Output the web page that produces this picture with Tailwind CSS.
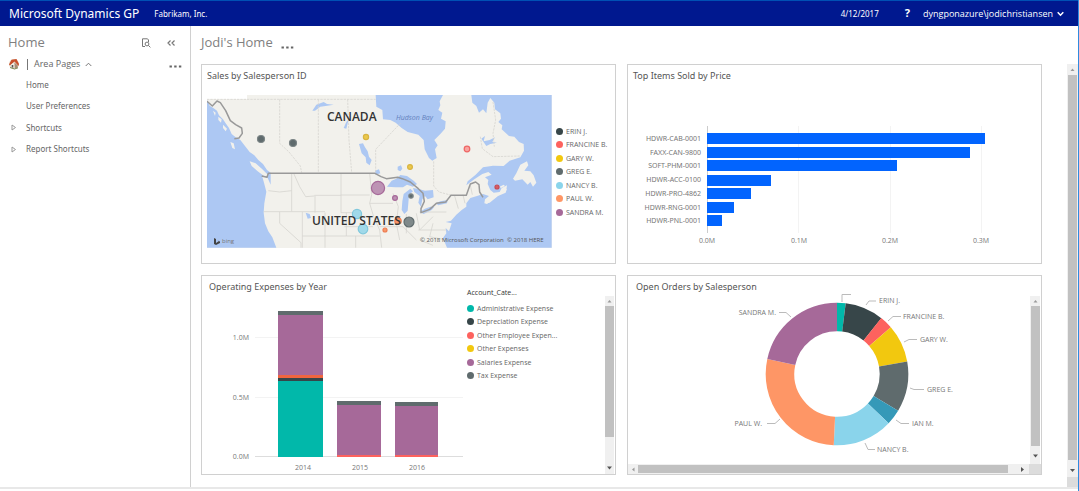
<!DOCTYPE html>
<html lang="en">
<head>
  <meta charset="UTF-8" />
  <meta name="viewport" content="width=device-width, initial-scale=1.0">
  <title>Microsoft Dynamics GP – Home</title>
  <script src="https://cdn.jsdelivr.net/npm/@tailwindcss/browser@4"></script>
</head>
<body class="h-screen flex flex-col overflow-hidden bg-white border-r border-[#2f8be0] font-['Open_Sans',sans-serif] text-[9px] text-[#666]">

  <!-- Top bar -->
  <header class="h-[26px] shrink-0 flex items-center pl-[9px] pr-[14px] bg-[#00188f] border-t border-[#0050b4] text-white font-['Noto_Sans',sans-serif]">
    <h1 class="text-[12px] leading-none whitespace-nowrap">Microsoft Dynamics GP</h1>
    <span class="ml-[15px] text-[8px]">Fabrikam, Inc.</span>
    <span class="ml-auto text-[8px]">4/12/2017</span>
    <button aria-label="Help" class="ml-[26px] text-[11px] font-bold">?</button>
    <button class="ml-[13px] flex items-center gap-1 text-[9px] font-['Open_Sans',sans-serif]">dyngponazure\jodichristiansen
      <svg class="w-[7px] h-[6px]" viewBox="0 0 7 6" fill="none" stroke="currentColor" stroke-width="1.5"><path d="M.7 1.2 3.5 4.2 6.3 1.2" /></svg>
    </button>
  </header>

  <div class="flex-1 flex min-h-0">

    <!-- Sidebar -->
    <aside class="w-[191px] shrink-0 border-r border-[#d0d0d0]">
      <div class="h-[34px] flex items-center pl-2 pr-[14px]">
        <h2 class="text-[13px] text-[#808080]">Home</h2>
        <button aria-label="Find page" class="ml-auto">
          <svg class="w-[10px] h-[10px]" viewBox="0 0 10 10" fill="none" stroke="#777" stroke-width="1"><path d="M4 8.5H1.5V.8H6.5L7.5 2V4" /><circle cx="6" cy="6" r="1.9" /><path d="M7.4 7.4 9.4 9.4" /></svg>
        </button>
        <button aria-label="Collapse" class="ml-[15px]">
          <svg class="w-[10px] h-[10px]" viewBox="0 0 10 10" fill="none" stroke="#777" stroke-width="1.2"><path d="M4.5 2.5 2 5 4.5 7.5M8.5 2.5 6 5 8.5 7.5" /></svg>
        </button>
      </div>
      <div class="h-[14px] -mt-[3px] flex items-center pl-2 pr-2">
        <svg class="w-[12px] h-[12px]" viewBox="0 0 12 12"><circle cx="6" cy="6" r="5" fill="#e9dccb" /><path d="M1 6.5 3.5 1.8 8.5 1 11 6 10.5 8 6.5 3.4 2 7.5Z" fill="#c8502c" /><path d="M2.5 7 5.8 4.4 6.5 9.5 3 9Z" fill="#f4eee4" /><path d="M6.5 4.6 9.8 7.5 9.5 10 6.8 10.6Z" fill="#a98d76" /><path d="M3.7 7h1.6v2.6H3.7Z" fill="#555" /><path d="M2 9.5 6.6 11 10 9.8" stroke="#7d8a55" fill="none" /></svg>
        <span class="ml-[7px] w-px h-[11px] bg-[#777]"></span>
        <button class="ml-[6px] flex items-center gap-[5px]">Area Pages
          <svg class="w-[7px] h-[5px]" viewBox="0 0 7 5" fill="none" stroke="#777"><path d="M.7 4 3.5 1.2 6.3 4" /></svg>
        </button>
        <button aria-label="More" class="ml-auto pt-1">
          <svg class="w-[13px] h-[3px]" viewBox="0 0 13 3" fill="#666"><path d="M.5.5h2.4v2H.5ZM5.2.5h2.4v2H5.2ZM9.9.5h2.4v2H9.9Z" /></svg>
        </button>
      </div>
      <nav class="pt-1 flex flex-col gap-[2px] text-[8px] font-['Noto_Sans',sans-serif]">
        <a href="#" class="h-[19px] flex items-center pl-[26px]">Home</a>
        <a href="#" class="h-[20px] flex items-center pl-[26px]">User Preferences</a>
        <a href="#" class="h-[19px] flex items-center gap-[9px] pl-[11px]">
          <svg class="w-[6px] h-[7px]" viewBox="0 0 6 7" fill="none" stroke="#999"><path d="M1 1 4.5 3.5 1 6Z" /></svg>Shortcuts</a>
        <a href="#" class="h-[20px] flex items-center gap-[9px] pl-[11px]">
          <svg class="w-[6px] h-[7px]" viewBox="0 0 6 7" fill="none" stroke="#999"><path d="M1 1 4.5 3.5 1 6Z" /></svg>Report Shortcuts</a>
      </nav>
    </aside>

    <!-- Content -->
    <main class="flex-1 min-w-0 flex flex-col pl-[10px]">
      <div class="h-[34px] mb-1 shrink-0 flex items-center">
        <h2 class="text-[13px] text-[#808080]">Jodi's Home</h2>
        <button aria-label="More" class="ml-[8px] pt-2">
          <svg class="w-[13px] h-[3px]" viewBox="0 0 13 3" fill="#666"><path d="M.5.5h2.4v2H.5ZM5.2.5h2.4v2H5.2ZM9.9.5h2.4v2H9.9Z" /></svg>
        </button>
      </div>

      <div class="flex-1 min-h-0 flex">
        <div class="flex-1 grid grid-cols-2 gap-x-[11px] gap-y-[11px] content-start pr-[25px]">

          <!-- Sales map -->
          <section class="h-[200px] border border-[#d0d0d0] overflow-hidden">
            <h3 class="h-[30px] pt-[4px] pl-[5px] leading-[13px] text-[#555] font-['Noto_Sans',sans-serif]">Sales by Salesperson ID</h3>
            <div class="flex items-center pl-[5px]">
              <svg class="flex-1 min-w-0" viewBox="0 0 345 153" role="img" aria-label="Map of sales in North America">
                <rect width="345" height="153" fill="#f2f1ec" />
                <g transform="scale(.33333) translate(-22 -105)" stroke-linejoin="round">
                  <path fill="#fff" d="M22 105H142V117H22Z" />
                  <g fill="#adc8f3">
                    <path d="M22 120 30 137 42 145 52 152 58 166 70 178 78 190 88 204 96 222 108 232 122 240 136 258 150 276 164 286 176 300 190 312 202 330 213 338 213 374 203 352 188 350 194 372 200 395 194 430 192 458 196 490 206 514 218 532 230 563H22Z" />
                    <path d="M528 105 530 140 548 150 550 178 572 180 588 188 606 204 624 216 656 224 672 240 675 268 688 294 698 302 711 294 706 268 714 256 704 240 722 222 736 206 738 184 724 176 728 158 716 150 722 136 720 124 730 105Z" />
                    <path d="M815 105 818 128 830 138 838 158 850 148 860 160 864 128 872 114 884 128 886 148 902 160 904 176 896 186 908 196 906 208 928 228 944 230 958 246 972 252 973 272 962 292 930 302 912 318 880 317 850 322 828 344 804 364 800 376 824 358 848 342 866 336 876 344 856 352 866 360 864 372 872 390 882 398 900 396 906 384 922 376 920 390 898 404 880 418 862 432 854 430 856 418 868 408 850 402 832 408 812 414 800 430 800 440 786 450 770 464 754 482 738 486 756 490 748 514 738 504 740 520 730 534 742 563H1056V105Z" />
                    <path d="M562 380 576 362 590 356 602 345 622 348 642 362 652 372 640 380 622 374 610 382 588 382ZM612 402 632 386 640 394 628 404 626 430 624 452 614 462 606 450 608 424ZM640 384 660 388 676 392 700 390 702 412 684 418 676 408 668 418 664 440 656 428 660 408 644 396ZM660 456 676 446 692 440 704 440 696 450 672 462ZM708 430 722 424 744 420 742 430 716 436Z" />
                    <path d="M478 252 490 250 496 262 504 274 508 290 516 300 510 316 500 308 498 292 486 280ZM338 152 350 134 372 126 382 132 402 134 378 138 362 140 346 152ZM432 204 440 186 448 176 444 190 440 206ZM526 332 538 328 542 340 528 344ZM594 320 604 316 608 326 602 334 594 330ZM318 458 330 462 334 474 324 476ZM845 236 856 228 852 244 870 240 886 232 878 246 892 248 872 252 860 258Z" />
                  </g>
                  <!-- islands -->
                  <g fill="#f2f1ec">
                    <path d="M940 356 950 340 962 314 982 304 986 316 974 332 992 334 1002 346 1010 368 1000 380 992 366 984 374 968 358 946 362Z" />
                    <path d="M150 304 168 310 188 328 206 346 196 350 174 334 156 318ZM92 246 102 250 106 268 98 264ZM56 170 66 178 64 188 56 180ZM40 152 48 158 46 168ZM70 194 82 206 78 214 70 204ZM900 380 912 374 916 378 904 384ZM885 402 905 398 922 386 918 398 895 408 870 428 860 430 864 420Z" />
                  </g>
                  <!-- provinces and states -->
                  <g fill="none" stroke="#d6d4cf" stroke-width="2.4">
                    <path stroke-dasharray="7 3" d="M22 118H528M240 118V250L268 276 302 318 306 338M356 118V338M444 118 448 240 456 338M528 336V268L602 190M702 304V378L718 396 756 406M880 126 888 180 880 220 884 260M842 230 848 266 880 290 960 288" />
                    <path d="M206 392 240 396 276 392M276 340V454M282 340 300 380 318 410 344 408M344 406H424M346 408V458M424 340V458M192 455H376M240 456V490L304 548V563M308 456V563M424 405H510M424 458H480M376 458V528H308M440 458V528H376M510 340 516 404 510 430H580M434 500H520M440 528H540M510 430 522 470 540 510 546 563M580 400 596 440 590 490 600 540M620 462V520M650 460 660 510 700 470M660 456H740M656 510H740M700 490 690 530 740 540M660 540 700 556M540 500 610 500 650 540M765 408 776 446M790 404 796 430M812 376 818 404M468 528V563M376 528V563" />
                  </g>
                  <!-- national border -->
                  <path fill="none" stroke="#999" stroke-width="4.5" d="M22 124 38 138 52 123 62 128 78 152 92 182 108 194 126 204 128 220 118 234 104 236M186 348 202 352 206 340H526L544 350 560 356 594 352 608 356 632 366 656 386 670 400 674 424 664 446 664 458 690 448 710 430 738 426 754 406H800L812 372 828 366 838 374 840 396 850 412" />
                </g>
                <g stroke-width="1.2">
                  <g fill="#5f6b6d" stroke="#7c8586"><circle cx="54" cy="44" r="3.5" /><circle cx="86" cy="48" r="3.5" /><circle cx="204" cy="101" r="2.2" /></g>
                  <circle cx="202" cy="127" r="5" fill="#7f898a" stroke="#5f6b6d" />
                  <g fill="#ebc84c" stroke="#d8b440"><circle cx="159" cy="42" r="2.6" /><circle cx="203" cy="72" r="2.4" /></g>
                  <g fill="#bd93b4" stroke="#a66999"><circle cx="171" cy="93" r="6.6" /><circle cx="188" cy="103" r="2.4" /></g>
                  <g fill="#a0d9e9" stroke="#80c8dc"><circle cx="150" cy="119" r="4.6" /><circle cx="156" cy="134" r="4.8" /></g>
                  <g fill="#f8976a" stroke="#ee7c50"><circle cx="191" cy="126" r="3.2" /><circle cx="178" cy="135" r="2" /></g>
                  <circle cx="260" cy="54" r="2.8" fill="#f9a3a0" stroke="#ee6664" />
                  <circle cx="290" cy="92" r="2" fill="#d65c62" stroke="#c84a54" />
                </g>
                <text x="120" y="26" font-size="12" font-weight="600" fill="#333">CANADA</text>
                <text x="105" y="130" font-size="12" font-weight="600" fill="#333">UNITED STATES</text>
                <text x="189" y="25" font-size="7" font-style="italic" fill="#6482c0">Hudson Bay</text>
                <path d="M7 143 9 144V148L12 146 10 145.5 13 146.5V148L9 150 7 149Z" fill="#444" />
                <text x="15" y="148" font-size="6" fill="#777">bing</text>
                <g font-size="6" fill="#555"><text x="213" y="147">© 2018 Microsoft Corporation</text><text x="300" y="147">© 2018 HERE</text></g>
              </svg>
              <ul class="w-[63px] h-[94px] shrink-0 pl-[4px] flex flex-col justify-between text-[7px] leading-[13px] whitespace-nowrap">
                <li class="flex items-center gap-[3px]"><span class="size-[7px] rounded-full bg-[#374649]"></span>ERIN J.</li>
                <li class="flex items-center gap-[3px]"><span class="size-[7px] rounded-full bg-[#fd625e]"></span>FRANCINE B.</li>
                <li class="flex items-center gap-[3px]"><span class="size-[7px] rounded-full bg-[#f2c80f]"></span>GARY W.</li>
                <li class="flex items-center gap-[3px]"><span class="size-[7px] rounded-full bg-[#5f6b6d]"></span>GREG E.</li>
                <li class="flex items-center gap-[3px]"><span class="size-[7px] rounded-full bg-[#8ad4eb]"></span>NANCY B.</li>
                <li class="flex items-center gap-[3px]"><span class="size-[7px] rounded-full bg-[#fe9666]"></span>PAUL W.</li>
                <li class="flex items-center gap-[3px]"><span class="size-[7px] rounded-full bg-[#a66999]"></span>SANDRA M.</li>
              </ul>
            </div>
          </section>

          <!-- Top items -->
          <section class="h-[200px] border border-[#d0d0d0] overflow-hidden">
            <h3 class="h-[22px] pt-[4px] pl-[5px] leading-[13px] text-[#555] font-['Noto_Sans',sans-serif]">Top Items Sold by Price</h3>
            <svg class="w-full" viewBox="0 0 413 176" role="img" aria-label="Top items sold by price">
              <g fill="#f3f3f3"><path d="M170 39h1v107h-1ZM262 39h1v107h-1ZM353 39h1v107h-1Z" /><path fill="#ccc" d="M79 39h1v107h-1Z" /></g>
              <g fill="#0264fe">
                <rect x="79" y="46" width="278" height="11" />
                <rect x="79" y="60" width="263" height="11" />
                <rect x="79" y="73" width="190" height="11" />
                <rect x="79" y="88" width="64" height="11" />
                <rect x="79" y="101" width="44" height="11" />
                <rect x="79" y="115" width="27" height="11" />
                <rect x="79" y="128" width="15" height="11" />
              </g>
              <g font-size="7" fill="#777" text-anchor="end" class="font-['Noto_Sans',sans-serif]">
                <text x="73" y="54">HDWR-CAB-0001</text>
                <text x="73" y="68">FAXX-CAN-9800</text>
                <text x="73" y="81">SOFT-PHM-0001</text>
                <text x="73" y="95">HDWR-ACC-0100</text>
                <text x="73" y="109">HDWR-PRO-4862</text>
                <text x="73" y="123">HDWR-RNG-0001</text>
                <text x="73" y="136">HDWR-PNL-0001</text>
              </g>
              <g font-size="7" fill="#777" text-anchor="middle">
                <text x="79" y="156">0.0M</text><text x="171" y="156">0.1M</text><text x="262" y="156">0.2M</text><text x="353" y="156">0.3M</text>
              </g>
            </svg>
          </section>

          <!-- Operating expenses -->
          <section class="relative h-[200px] border border-[#d0d0d0] overflow-hidden">
            <h3 class="h-[22px] pt-[4px] pl-[7px] leading-[13px] text-[#555] font-['Noto_Sans',sans-serif]">Operating Expenses by Year</h3>
            <div class="flex items-start">
              <svg class="flex-1 min-w-0" viewBox="0 0 264 176" role="img" aria-label="Operating expenses by year">
                <path fill="#f3f3f3" d="M53 39h208v1H53ZM53 99h208v1H53Z" /><path fill="#ddd" d="M53 158h208v1H53Z" />
                <g fill="#a66999"><rect x="76" y="17" width="45" height="60" /><rect x="135" y="107" width="44" height="50" /><rect x="193" y="108" width="43" height="49" /></g>
                <g fill="#5f6b6d"><rect x="76" y="13" width="45" height="4" /><rect x="135" y="103" width="44" height="4" /><rect x="193" y="104" width="43" height="4" /></g>
                <rect x="76" y="77" width="45" height="3" fill="#f0653f" />
                <rect x="76" y="80" width="45" height="3" fill="#374649" />
                <rect x="76" y="83" width="45" height="76" fill="#01b8aa" />
                <path fill="#fd625e" d="M135 157h44v2h-44ZM193 157h43v2h-43Z" />
                <g font-size="7" fill="#777">
                  <g text-anchor="end"><text x="47" y="42">1.0M</text><text x="47" y="102">0.5M</text><text x="47" y="161">0.0M</text></g>
                  <g text-anchor="middle"><text x="101" y="172">2014</text><text x="158" y="172">2015</text><text x="215" y="172">2016</text></g>
                </g>
              </svg>
              <div class="w-[149px] shrink-0 -mt-[11px] pl-px text-[7px]">
                <h4 class="h-[15px] leading-[12px] text-[#333]">Account_Cate...</h4>
                <ul class="h-[80px] flex flex-col justify-between leading-[13px] whitespace-nowrap">
                  <li class="flex items-center gap-[3px]"><span class="size-[7px] rounded-full bg-[#01b8aa]"></span>Administrative Expense</li>
                  <li class="flex items-center gap-[3px]"><span class="size-[7px] rounded-full bg-[#374649]"></span>Depreciation Expense</li>
                  <li class="flex items-center gap-[3px]"><span class="size-[7px] rounded-full bg-[#fd625e]"></span>Other Employee Expen...</li>
                  <li class="flex items-center gap-[3px]"><span class="size-[7px] rounded-full bg-[#f2c80f]"></span>Other Expenses</li>
                  <li class="flex items-center gap-[3px]"><span class="size-[7px] rounded-full bg-[#a66999]"></span>Salaries Expense</li>
                  <li class="flex items-center gap-[3px]"><span class="size-[7px] rounded-full bg-[#5f6b6d]"></span>Tax Expense</li>
                </ul>
              </div>
            </div>
            <div class="absolute top-5 right-px bottom-0 w-[9px] flex flex-col items-center bg-[#f0f0f0]">
              <svg class="h-[10px] w-[9px]" viewBox="0 0 9 10"><path d="M2.5 6.5 4.5 4 6.5 6.5Z" fill="#999" /></svg>
              <span class="w-full h-[131px] bg-[#c1c1c1]"></span>
              <svg class="mt-auto h-[13px] w-[9px]" viewBox="0 0 9 13"><path d="M2 5.5 4.5 8.5 7 5.5Z" fill="#555" /></svg>
            </div>
          </section>

          <!-- Open orders -->
          <section class="relative h-[200px] border border-[#d0d0d0] overflow-hidden">
            <h3 class="h-[22px] pt-[4px] pl-[8px] leading-[13px] text-[#555] font-['Noto_Sans',sans-serif]">Open Orders by Salesperson</h3>
            <div class="pr-[11px]">
              <svg class="w-full overflow-visible" viewBox="-209 -76 402 166" role="img" aria-label="Open orders by salesperson">
                <g fill="none" stroke-width="28.6">
                  <path stroke="#01b8aa" d="M0-57A57 57 0 0 1 6.95-56.6" />
                  <path stroke="#374649" d="M6.95-56.6A57 57 0 0 1 35.4-44.67" />
                  <path stroke="#fd625e" d="M35.4-44.67A57 57 0 0 1 43.02-37.4" />
                  <path stroke="#f2c80f" d="M43.02-37.4A57 57 0 0 1 56.13-9.9" />
                  <path stroke="#5f6b6d" d="M56.13-9.9A57 57 0 0 1 48.86 29.36" />
                  <path stroke="#3599b8" d="M48.86 29.36A57 57 0 0 1 41.28 39.31" />
                  <path stroke="#8ad4eb" d="M41.28 39.31A57 57 0 0 1-2.59 56.94" />
                  <path stroke="#fe9666" d="M-2.59 56.94A57 57 0 0 1-55.71-12.05" />
                  <path stroke="#a66999" d="M-55.71-12.05A57 57 0 0 1 0-57" />
                </g>
                <path fill="none" stroke="#bbb" stroke-width="1" d="M5-72V-79.5H14M29-69 32-73H39M51-53 56-57.5H64M67-32 72-34.5H80M73 14 77 15.5H87M59 46 64 49.5H72M28 69 31 75.5H38M-46-57-51-61.5H-58M-57 45-62 49.5H-70" />
                <g font-size="7" fill="#777">
                  <text x="42" y="-71">ERIN J.</text>
                  <text x="66" y="-55">FRANCINE B.</text>
                  <text x="83" y="-32">GARY W.</text>
                  <text x="90" y="18">GREG E.</text>
                  <text x="75" y="52">IAN M.</text>
                  <text x="40" y="78">NANCY B.</text>
                  <text x="-61" y="-59" text-anchor="end">SANDRA M.</text>
                  <text x="-75" y="52" text-anchor="end">PAUL W.</text>
                </g>
              </svg>
            </div>
            <div class="absolute top-5 right-px bottom-[10px] w-[10px] flex flex-col items-center bg-[#f0f0f0]">
              <svg class="h-[10px] w-[9px]" viewBox="0 0 9 10"><path d="M2.5 6.5 4.5 4 6.5 6.5Z" fill="#999" /></svg>
              <span class="w-[9px] h-[140px] bg-[#c1c1c1]"></span>
              <svg class="mt-auto h-[13px] w-[9px]" viewBox="0 0 9 13"><path d="M2 3.5 4.5 6.5 7 3.5Z" fill="#555" /></svg>
            </div>
            <div class="absolute inset-x-0 bottom-0 h-[10px] flex items-center bg-[#f0f0f0]">
              <svg class="w-[10px] h-[9px]" viewBox="0 0 10 9"><path d="M6.5 2.5 4 4.5 6.5 6.5Z" fill="#999" /></svg>
              <span class="flex-1 h-[8px] bg-[#c1c1c1]"></span>
              <svg class="w-[21px] h-[9px]" viewBox="0 0 21 9"><path d="M13 2 16 4.5 13 7Z" fill="#555" /></svg>
              <span class="w-[12px] h-full bg-[#dcdcdc]"></span>
            </div>
          </section>
        </div>

        <!-- Page scrollbar -->
        <div class="w-[11px] shrink-0 flex flex-col items-center bg-[#f0f0f0]">
          <svg class="h-[11px] w-[9px]" viewBox="0 0 9 11"><path d="M2.5 7 4.5 4.5 6.5 7Z" fill="#999" /></svg>
          <span class="w-[9px] flex-1 bg-[#c1c1c1]"></span>
          <svg class="h-[17px] w-[9px]" viewBox="0 0 9 17"><path d="M2 9 4.5 12 7 9Z" fill="#555" /></svg>
          <span class="w-full h-[10px] bg-[#dcdcdc]"></span>
        </div>
      </div>
    </main>
  </div>

  <footer class="h-[4px] shrink-0 border-t-2 border-[#e8e8e8]"></footer>

</body>
</html>
